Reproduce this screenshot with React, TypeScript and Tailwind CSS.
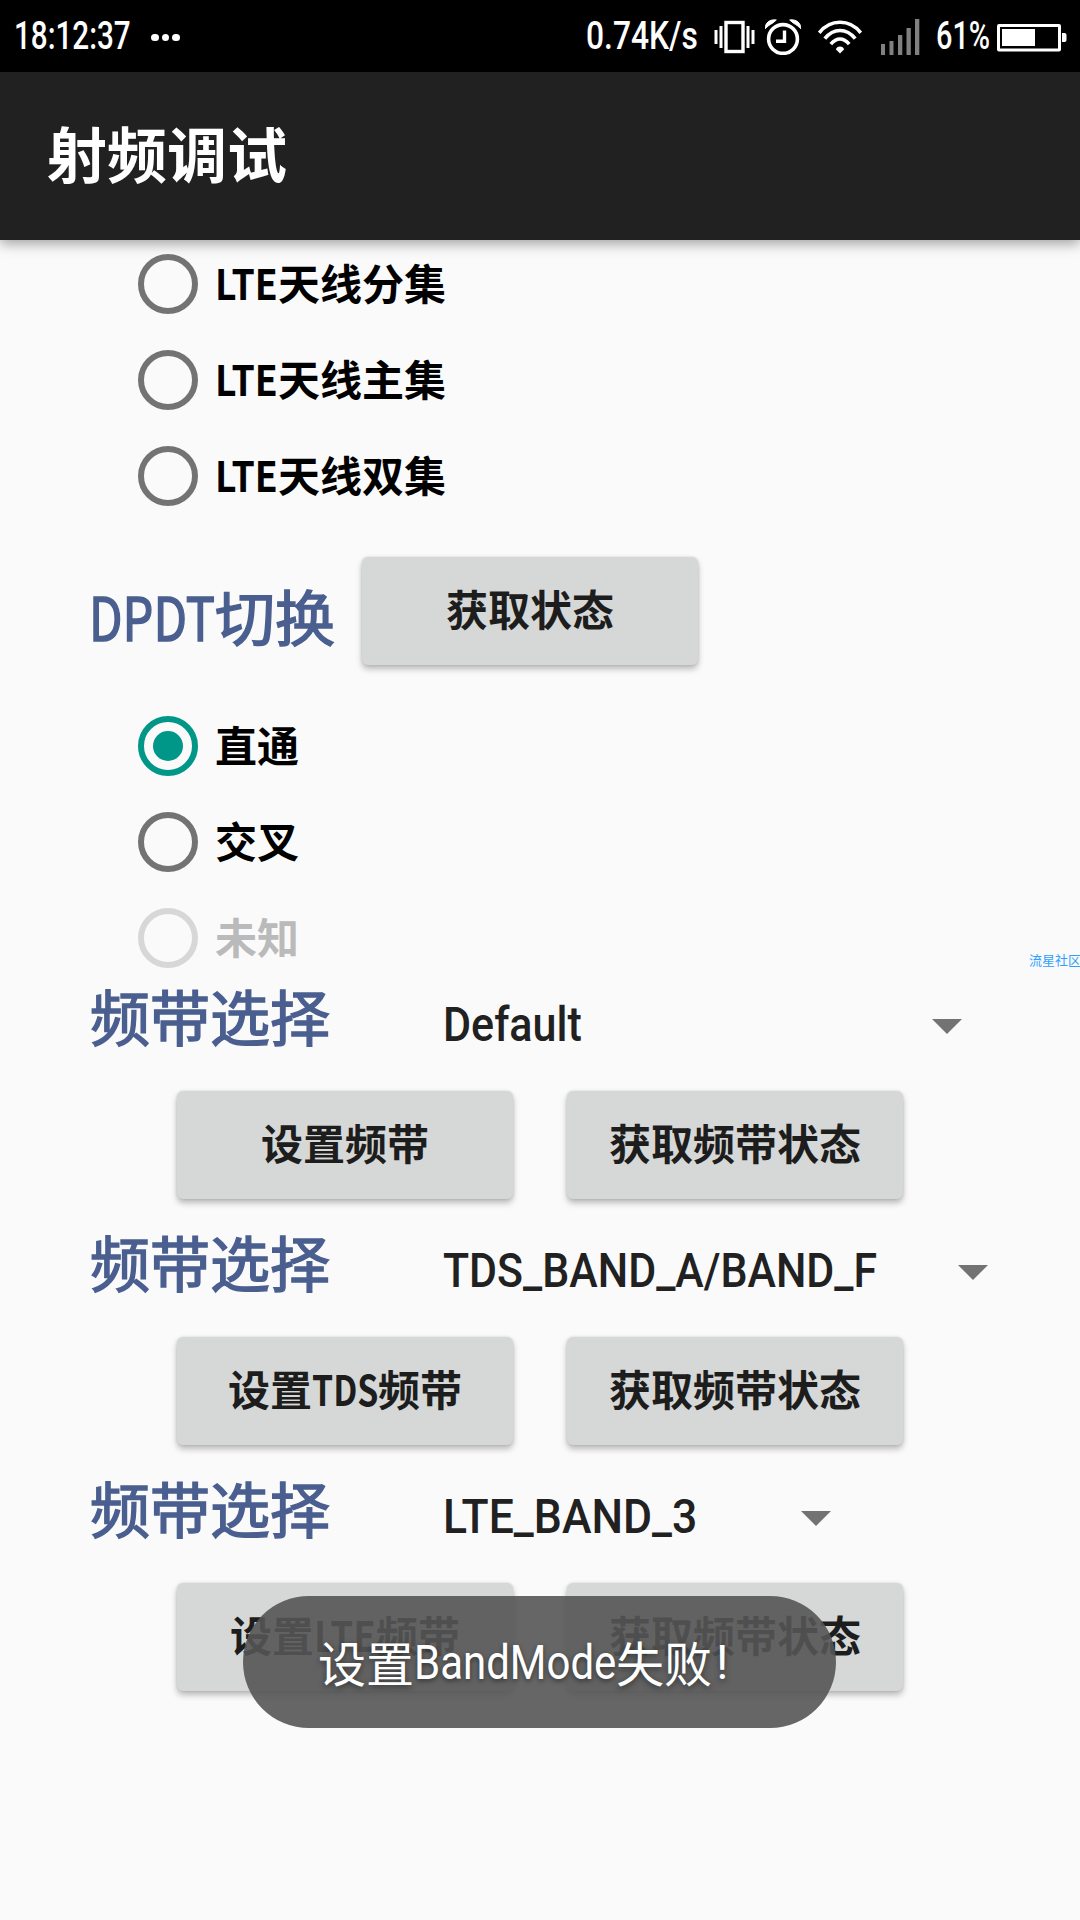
import { useLayoutEffect, useRef, useState } from "react";
import type { ReactNode } from "react";
import clsx from "clsx";

interface FitProps {
  width: number;
  className?: string;
  children: ReactNode;
}

// Squeezes one run of text horizontally so that it takes exactly `width` pixels
function Fit({ width, className, children }: FitProps) {
  const ref = useRef<HTMLSpanElement>(null);
  const [scale, setScale] = useState(1);

  useLayoutEffect(() => {
    if (ref.current) setScale(width / ref.current.offsetWidth);
  }, [width]);

  return (
    <span className={clsx("inline-block whitespace-nowrap", className)} style={{ width }}>
      <span ref={ref} className="inline-block origin-left" style={{ transform: `scaleX(${scale})` }}>
        {children}
      </span>
    </span>
  );
}

function VibrateIcon() {
  return (
    <svg width="41" height="34" viewBox="0 0 41 34" fill="#fff">
      <rect x="12" y="2.5" width="17" height="29" fill="none" stroke="#fff" strokeWidth="3.4" />
      <rect x="0.5" y="10" width="3" height="14" />
      <rect x="5.5" y="6" width="3" height="22" />
      <rect x="32.5" y="6" width="3" height="22" />
      <rect x="37.5" y="10" width="3" height="14" />
    </svg>
  );
}

function AlarmIcon() {
  return (
    <svg width="36" height="36" viewBox="0 0 36 36" fill="none" stroke="#fff">
      <circle cx="18" cy="20" r="14.4" strokeWidth="3.6" />
      <path d="M19.5 11.5v10.8h-8.5" strokeWidth="3.4" />
      <path d="M0.3 9.7C0 4 4.500 0 11.300 1L7.500 4.200C4.500 5.800 2.400 7.400 0.3 9.7Z" fill="#fff" />
      <path d="M35.7 9.7C36 4 31.500 0 24.700 1L28.500 4.200C31.500 5.800 33.600 7.400 35.7 9.7Z" fill="#fff" />
    </svg>
  );
}

function WifiIcon() {
  return (
    <svg width="44" height="34" viewBox="0 0 44 34" fill="none" stroke="#fff" strokeWidth="3.6">
      <path d="M1.2 12.8C12.5-1.2 31.5-1.2 42.8 12.8" />
      <path d="M6.8 18.6C15.5 7.8 28.5 7.8 37.2 18.6" />
      <path d="M12.8 24.2C18.5 17.2 25.5 17.2 31.2 24.2" />
      <path d="M22 33.5l-4-4c.2-4 7.800-4 8 0z" fill="#fff" stroke="none" />
    </svg>
  );
}

function SignalIcon() {
  return (
    <svg width="39" height="36" viewBox="0 0 39 36" fill="#808080">
      <rect x="0" y="25" width="4" height="11" />
      <rect x="8.500" y="22" width="4" height="14" />
      <rect x="17" y="16" width="4.300" height="20" />
      <rect x="25.500" y="9" width="4.300" height="27" />
      <rect x="34" y="0" width="4.300" height="36" />
    </svg>
  );
}

function BatteryIcon() {
  return (
    <svg width="70" height="28" viewBox="0 0 70 28" fill="#fff">
      <rect x="1.500" y="1.500" width="61" height="24.500" rx="0.500" fill="none" stroke="#fff" strokeWidth="3" />
      <rect x="5" y="5" width="33" height="17" />
      <path d="M65 9h2.500q2 0 2 2v5q0 2-2 2h-2.500z" />
    </svg>
  );
}

function StatusBar() {
  return (
    <div className="flex h-[72px] items-center bg-black pl-[14px] pr-[13px] font-['Roboto',sans-serif] text-[38px] leading-[72px] font-medium text-white">
      <Fit width={117}>18:12:37</Fit>
      <div className="ml-5 flex gap-[3px] pt-[3px]">
        <div className="size-[7.500px] rounded-full bg-white" />
        <div className="size-[7.500px] rounded-full bg-white" />
        <div className="size-[7.500px] rounded-full bg-white" />
      </div>
      <div className="ml-auto flex h-[72px] items-center">
        <Fit width={112} className="mr-[16px]">0.74K/s</Fit>
        <div className="mt-[2px] mr-[10px]"><VibrateIcon /></div>
        <div className="mt-[2px] mr-[17px]"><AlarmIcon /></div>
        <div className="mt-[1px] mr-[19px]"><WifiIcon /></div>
        <div className="mt-[1px] mr-[16px]"><SignalIcon /></div>
        <Fit width={54} className="mr-[7px]">61%</Fit>
        <div className="mt-[3px]"><BatteryIcon /></div>
      </div>
    </div>
  );
}

interface RadioProps {
  children: ReactNode;
  checked?: boolean;
  disabled?: boolean;
}

function Radio({ children, checked, disabled }: RadioProps) {
  return (
    <div className="flex h-24 items-center pl-[138px]">
      <div
        className={clsx(
          "flex size-[60px] items-center justify-center rounded-full border-[6px]",
          checked ? "border-[#009688]" : disabled ? "border-[#d7d7d7]" : "border-[#737373]"
        )}
      >
        {checked && <div className="size-[30px] rounded-full bg-[#009688]" />}
      </div>
      <div className={clsx("ml-[17px] pb-[5px] text-[42px] leading-[60px] font-bold", disabled ? "text-[#bababa]" : "text-black")}>
        {children}
      </div>
    </div>
  );
}

function Button({ children }: { children: ReactNode }) {
  return (
    <button className="flex h-[108px] w-[336px] items-center justify-center rounded-[6px] bg-[#d6d8d7] pb-[6px] text-[42px] leading-[60px] font-bold whitespace-nowrap text-[#1d1d1d] shadow-[0_4px_6px_rgba(0,0,0,0.26),0_0_3px_rgba(0,0,0,0.12)]">
      {children}
    </button>
  );
}

interface BandProps {
  value: string;
  valueWidth: number;
  arrowGap: number;
  action: ReactNode;
}

function BandSection({ value, valueWidth, arrowGap, action }: BandProps) {
  return (
    <section className="h-[246px]">
      <div className="flex h-[105px] pl-[90px]">
        <h2 className="-mt-[3px] w-[353px] text-[60px] leading-[64px] text-[#4a5f8f] [-webkit-text-stroke:1.500px_#4a5f8f]">
          频带选择
        </h2>
        <div className="flex h-[78px] items-center font-['Roboto',sans-serif] text-[48px] leading-[78px] font-medium text-[#212121]">
          <Fit width={valueWidth}>{value}</Fit>
          <svg className="mt-[3px]" style={{ marginLeft: arrowGap }} width="30" height="15" viewBox="0 0 30 15">
            <path d="M0 0h30L15 15z" fill="#737373" />
          </svg>
        </div>
      </div>
      <div className="flex gap-[54px] pl-[177px]">
        <Button>{action}</Button>
        <Button>获取频带状态</Button>
      </div>
    </section>
  );
}

export default function App() {
  return (
    <div className="relative h-[1920px] w-[1080px] overflow-hidden bg-[#fafafa] font-['Noto_Sans_CJK_SC',sans-serif]">
      <StatusBar />
      <header className="flex h-[168px] items-center bg-[#212121] pl-[47px] pb-[9px] text-[60px] leading-none font-bold text-white shadow-[0_4px_12px_rgba(0,0,0,0.35)]">
        射频调试
      </header>

      <main>
        <div className="-mt-1">
          <Radio><Fit width={63}>LTE</Fit>天线分集</Radio>
          <Radio><Fit width={63}>LTE</Fit>天线主集</Radio>
          <Radio><Fit width={63}>LTE</Fit>天线双集</Radio>
        </div>

        <div className="mt-[33px] flex h-[108px] pl-[89px]">
          <h2 className="w-[273px] pt-[26px] text-[60px] leading-[64px] text-[#4a5f8f] [-webkit-text-stroke:1.500px_#4a5f8f]">
            <Fit width={126}>DPDT</Fit>切换
          </h2>
          <Button>获取状态</Button>
        </div>

        <div className="mt-[33px]">
          <Radio checked>直通</Radio>
          <Radio>交叉</Radio>
          <Radio disabled>未知</Radio>
        </div>

        <BandSection value="Default" valueWidth={139} arrowGap={350} action="设置频带" />
        <BandSection
          value="TDS_BAND_A/BAND_F"
          valueWidth={434}
          arrowGap={81}
          action={<>设置<Fit width={66}>TDS</Fit>频带</>}
        />
        <BandSection
          value="LTE_BAND_3"
          valueWidth={254}
          arrowGap={104}
          action={<>设置<Fit width={62}>LTE</Fit>频带</>}
        />
      </main>

      {/* Forum watermark, runs off the right edge */}
      <div className="absolute top-[950px] left-[1029px] text-[13px] leading-5 whitespace-nowrap text-[#2ea0ff]">流星社区</div>

      {/* Toast */}
      <div className="absolute top-[1596px] left-[243px] flex h-[132px] w-[593px] items-center rounded-full bg-[#555555]/90 pl-[75px] pb-[3px] text-[48px] leading-[72px] whitespace-nowrap text-white [text-shadow:0_2px_6px_rgba(0,0,0,0.5)]">
        设置<Fit width={202} className="pt-[5px] font-['Roboto',sans-serif]">BandMode</Fit>失败
        <span className="ml-1 pt-[5px] font-['Roboto',sans-serif]">!</span>
      </div>
    </div>
  );
}
